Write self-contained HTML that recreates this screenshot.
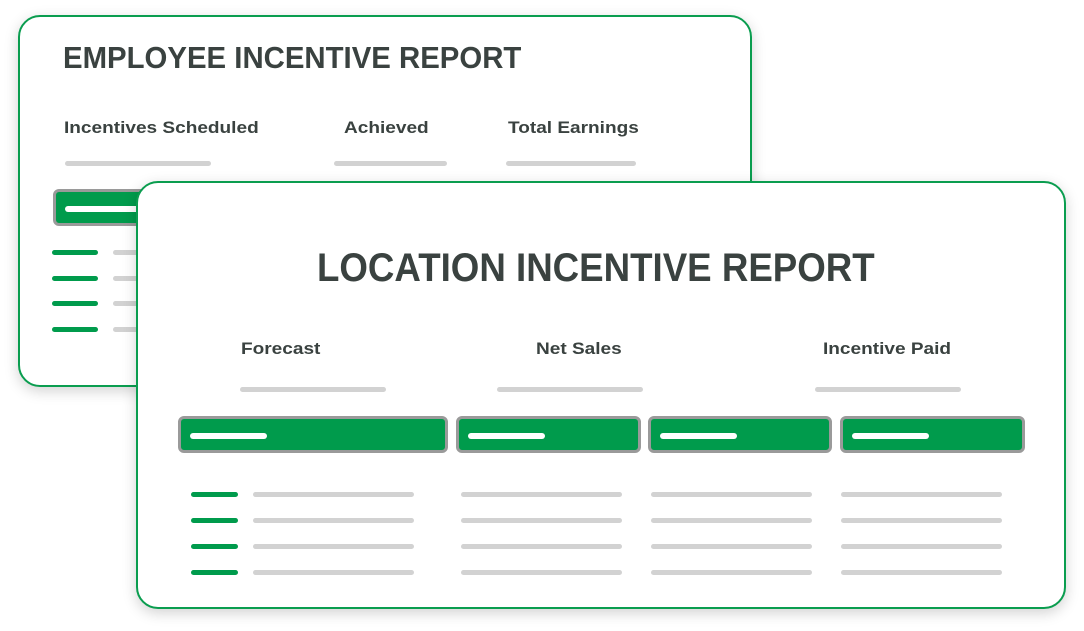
<!DOCTYPE html>
<html><head><meta charset="utf-8"><style>
*{margin:0;padding:0;box-sizing:border-box}
body{width:1084px;height:631px;background:#fff;position:relative;overflow:hidden;font-family:"Liberation Sans",sans-serif;color:#3a4240}
.card{position:absolute;background:#fff;border:2px solid #0a9d4f;box-shadow:0 4px 14px rgba(0,0,0,.18)}
.t{position:absolute;font-weight:bold;white-space:nowrap;transform-origin:left top}
.l{transform:scaleX(1.12)}
.g{position:absolute;height:5px;border-radius:3px;background:#d2d2d2}
.gr{position:absolute;height:5px;border-radius:3px;background:#009b4c}
.btn{position:absolute;height:37px;background:#009b4c;border:3px solid #9a9a9a;border-radius:6px}
.btn i{position:absolute;left:9px;top:14px;width:77px;height:6px;border-radius:3px;background:#fff}
</style></head><body>
<div class="card" style="left:18px;top:15px;width:734px;height:372px;border-radius:22px">
  <div class="t" style="left:43px;top:23px;font-size:31px;transform:scaleX(0.947)">EMPLOYEE INCENTIVE REPORT</div>
  <div class="t l" style="left:44px;top:101px;font-size:17px">Incentives Scheduled</div>
  <div class="t l" style="left:324px;top:101px;font-size:17px">Achieved</div>
  <div class="t l" style="left:488px;top:101px;font-size:17px">Total Earnings</div>
  <div class="g" style="left:45px;top:144px;width:146px"></div>
  <div class="g" style="left:314px;top:144px;width:113px"></div>
  <div class="g" style="left:486px;top:144px;width:130px"></div>
  <div class="btn" style="left:33px;top:172px;width:110px"><i></i></div>
  <div class="gr" style="left:32px;top:233px;width:46px"></div>
  <div class="gr" style="left:32px;top:259px;width:46px"></div>
  <div class="gr" style="left:32px;top:284px;width:46px"></div>
  <div class="gr" style="left:32px;top:310px;width:46px"></div>
  <div class="g" style="left:93px;top:233px;width:30px"></div>
  <div class="g" style="left:93px;top:259px;width:30px"></div>
  <div class="g" style="left:93px;top:284px;width:30px"></div>
  <div class="g" style="left:93px;top:310px;width:30px"></div>
</div>
<div class="card" style="left:136px;top:181px;width:930px;height:428px;border-radius:22px">
  <div class="t" style="left:179px;top:63px;font-size:40px;transform:scaleX(0.917)">LOCATION INCENTIVE REPORT</div>
  <div class="t l" style="left:103px;top:156px;font-size:17px">Forecast</div>
  <div class="t l" style="left:398px;top:156px;font-size:17px">Net Sales</div>
  <div class="t l" style="left:685px;top:156px;font-size:17px">Incentive Paid</div>
  <div class="g" style="left:102px;top:204px;width:146px"></div>
  <div class="g" style="left:359px;top:204px;width:146px"></div>
  <div class="g" style="left:677px;top:204px;width:146px"></div>
  <div class="btn" style="left:40px;top:233px;width:270px"><i></i></div>
  <div class="btn" style="left:318px;top:233px;width:185px"><i></i></div>
  <div class="btn" style="left:510px;top:233px;width:184px"><i></i></div>
  <div class="btn" style="left:702px;top:233px;width:185px"><i></i></div>
  <div class="gr" style="left:53px;top:309px;width:47px"></div>
  <div class="gr" style="left:53px;top:335px;width:47px"></div>
  <div class="gr" style="left:53px;top:361px;width:47px"></div>
  <div class="gr" style="left:53px;top:387px;width:47px"></div>
  <div class="g" style="left:115px;top:309px;width:161px"></div>
  <div class="g" style="left:115px;top:335px;width:161px"></div>
  <div class="g" style="left:115px;top:361px;width:161px"></div>
  <div class="g" style="left:115px;top:387px;width:161px"></div>
  <div class="g" style="left:323px;top:309px;width:161px"></div>
  <div class="g" style="left:323px;top:335px;width:161px"></div>
  <div class="g" style="left:323px;top:361px;width:161px"></div>
  <div class="g" style="left:323px;top:387px;width:161px"></div>
  <div class="g" style="left:513px;top:309px;width:161px"></div>
  <div class="g" style="left:513px;top:335px;width:161px"></div>
  <div class="g" style="left:513px;top:361px;width:161px"></div>
  <div class="g" style="left:513px;top:387px;width:161px"></div>
  <div class="g" style="left:703px;top:309px;width:161px"></div>
  <div class="g" style="left:703px;top:335px;width:161px"></div>
  <div class="g" style="left:703px;top:361px;width:161px"></div>
  <div class="g" style="left:703px;top:387px;width:161px"></div>
</div>
</body></html>
